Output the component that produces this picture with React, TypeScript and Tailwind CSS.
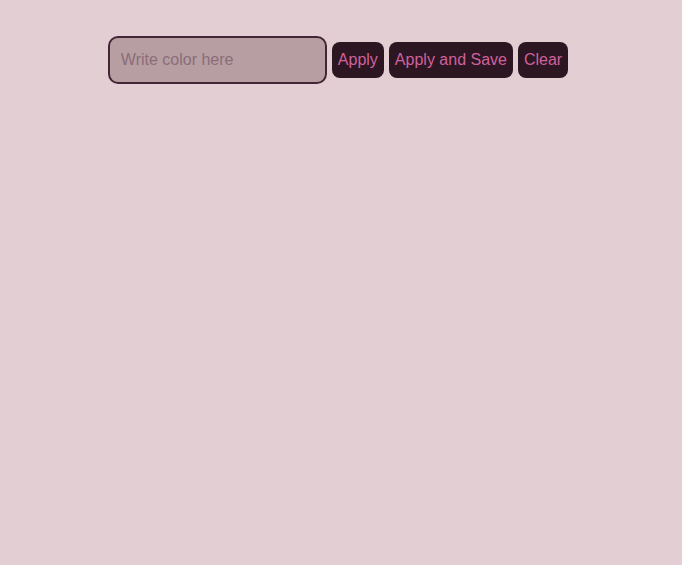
export default function App() {
  return (
    <div className="min-h-screen bg-[#e3cfd3] pt-9 font-['Liberation_Sans',Arial,sans-serif]">
      <div className="flex items-center justify-center gap-[5px] pr-[6px]">
        <input
          type="text"
          placeholder="Write color here"
          className="h-12 w-[219px] rounded-[10px] border-2 border-[#432636] bg-[#b69ea3] pl-[11px] pr-3 text-base text-[#3d2130] outline-none placeholder:text-[#8b6d78]"
        />
        <button className="h-9 rounded-lg bg-[#2c1622] px-1.5 text-base text-[#cf619c]">Apply</button>
        <button className="h-9 rounded-lg bg-[#2c1622] px-1.5 text-base text-[#cf619c]">Apply and Save</button>
        <button className="h-9 rounded-lg bg-[#2c1622] px-1.5 text-base text-[#cf619c]">Clear</button>
      </div>
    </div>
  );
}
